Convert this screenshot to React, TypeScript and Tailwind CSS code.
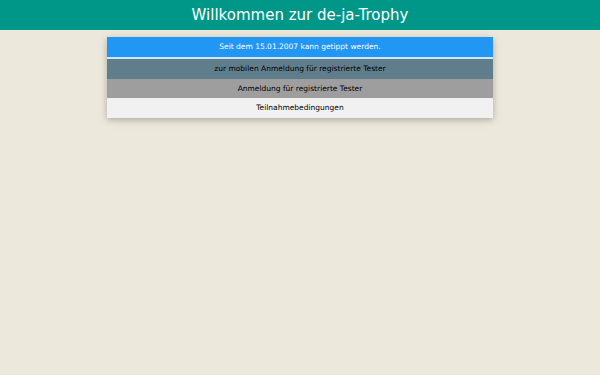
export default function App() {
  return (
    <div className="min-h-[375px] bg-[#ede8dc] font-['DejaVu_Sans',Verdana,sans-serif]">
      <header className="flex h-[30px] items-center justify-center bg-[#009688]">
        <h1 className="text-[15px] leading-none text-white">Willkommen zur de-ja-Trophy</h1>
      </header>

      <div className="mx-auto mt-[7px] w-[386px] shadow-[0_2px_5px_rgba(0,0,0,0.16),0_2px_10px_rgba(0,0,0,0.12)]">
        <div className="flex h-[22px] items-center justify-center border-b-2 border-[#cfe8fc] bg-[#2196f3] text-[7.5px] text-white">
          Seit dem 15.01.2007 kann getippt werden.
        </div>
        <div className="flex h-[20px] items-center justify-center bg-[#607d8b] text-[7.5px] text-black">
          zur mobilen Anmeldung für registrierte Tester
        </div>
        <div className="flex h-[19px] items-center justify-center bg-[#9e9e9e] text-[7.5px] text-black">
          Anmeldung für registrierte Tester
        </div>
        <div className="flex h-[20px] items-center justify-center bg-[#f1f1f1] text-[7.5px] text-black">
          Teilnahmebedingungen
        </div>
      </div>
    </div>
  );
}
